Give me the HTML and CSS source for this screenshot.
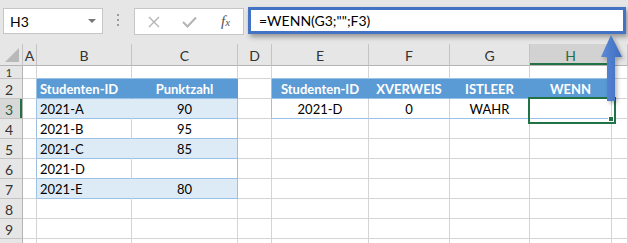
FILE: index.html
```html
<!DOCTYPE html>
<html lang="de">
<head>
    <meta charset="UTF-8">
    <title>WENN ISTLEER</title>
    <link rel="stylesheet" href="styles.css">
</head>
<body>
    <div class="toolbar">
        <div class="namebox">
            <span>H3</span>
            <span class="caret"></span>
        </div>
        <div class="dots"><i></i><i></i><i></i></div>
        <div class="fbtns">
            <svg width="12" height="12" viewBox="0 0 12 12"><path d="M1 1L11 11M11 1L1 11" stroke="#b4b4b4" stroke-width="1.4" fill="none"/></svg>
            <svg width="15" height="12" viewBox="0 0 15 12"><path d="M1 6L5.5 10.5L14 1.5" stroke="#b4b4b4" stroke-width="2" fill="none"/></svg>
            <span class="fx">f<small>x</small></span>
        </div>
        <div class="formula">=WENN(G3;"";F3)</div>
    </div>

    <div class="sheet">
        <!-- column headers -->
        <div class="c ch corner"><span class="tri"></span></div>
        <div class="c ch">A</div>
        <div class="c ch">B</div>
        <div class="c ch">C</div>
        <div class="c ch">D</div>
        <div class="c ch">E</div>
        <div class="c ch">F</div>
        <div class="c ch">G</div>
        <div class="c ch ch-sel">H</div>
        <div class="c ch"></div>

        <!-- 1 -->
        <div class="c rh rh-low">1</div>
        <div class="c"></div>
        <div class="c bb"></div>
        <div class="c bb"></div>
        <div class="c"></div>
        <div class="c bb"></div>
        <div class="c bb"></div>
        <div class="c bb"></div>
        <div class="c bb"></div>
        <div class="c"></div>

        <!-- 2 -->
        <div class="c rh">2</div>
        <div class="c rb"></div>
        <div class="c head">Studenten-ID</div>
        <div class="c head mid">Punktzahl</div>
        <div class="c rb"></div>
        <div class="c head mid">Studenten-ID</div>
        <div class="c head mid">XVERWEIS</div>
        <div class="c head mid">ISTLEER</div>
        <div class="c head mid">WENN</div>
        <div class="c"></div>

        <!-- 3 -->
        <div class="c rh rh-sel">3</div>
        <div class="c rb"></div>
        <div class="c band nb">2021-A</div>
        <div class="c band mid">90</div>
        <div class="c rb"></div>
        <div class="c bb mid">2021-D</div>
        <div class="c bb mid">0</div>
        <div class="c bb mid">WAHR</div>
        <div class="c bb sel"><span class="handle"></span></div>
        <div class="c"></div>

        <!-- 4 -->
        <div class="c rh">4</div>
        <div class="c rb"></div>
        <div class="c bb">2021-B</div>
        <div class="c bb rb mid">95</div>
        <div class="c"></div>
        <div class="c"></div>
        <div class="c"></div>
        <div class="c"></div>
        <div class="c"></div>
        <div class="c"></div>

        <!-- 5 -->
        <div class="c rh">5</div>
        <div class="c rb"></div>
        <div class="c band nb">2021-C</div>
        <div class="c band mid">85</div>
        <div class="c"></div>
        <div class="c"></div>
        <div class="c"></div>
        <div class="c"></div>
        <div class="c"></div>
        <div class="c"></div>

        <!-- 6 -->
        <div class="c rh">6</div>
        <div class="c rb"></div>
        <div class="c bb">2021-D</div>
        <div class="c bb rb mid"></div>
        <div class="c"></div>
        <div class="c"></div>
        <div class="c"></div>
        <div class="c"></div>
        <div class="c"></div>
        <div class="c"></div>

        <!-- 7 -->
        <div class="c rh">7</div>
        <div class="c rb"></div>
        <div class="c band nb">2021-E</div>
        <div class="c band mid">80</div>
        <div class="c"></div>
        <div class="c"></div>
        <div class="c"></div>
        <div class="c"></div>
        <div class="c"></div>
        <div class="c"></div>

        <!-- 8 -->
        <div class="c rh">8</div>
        <div class="c"></div><div class="c"></div><div class="c"></div><div class="c"></div>
        <div class="c"></div><div class="c"></div><div class="c"></div><div class="c"></div><div class="c"></div>

        <!-- 9 -->
        <div class="c rh">9</div>
        <div class="c"></div><div class="c"></div><div class="c"></div><div class="c"></div>
        <div class="c"></div><div class="c"></div><div class="c"></div><div class="c"></div><div class="c"></div>

        <!-- 10, only its top edge is in view -->
        <div class="c rh"></div>
        <div class="c"></div><div class="c"></div><div class="c"></div><div class="c"></div>
        <div class="c"></div><div class="c"></div><div class="c"></div><div class="c"></div><div class="c"></div>
    </div>

    <svg class="arrow" width="30" height="75" viewBox="0 0 30 75">
        <defs>
            <linearGradient id="ag" x1="0" x2="1" y1="0" y2="0">
                <stop offset="0" stop-color="#5a8ad8"/>
                <stop offset="1" stop-color="#3e6dbd"/>
            </linearGradient>
        </defs>
        <path d="M13 5L24 27H17V71H9V27H3Z" fill="url(#ag)"/>
    </svg>
</body>
</html>
```

FILE: styles.css
```css
* {
    margin: 0;
    padding: 0;
    box-sizing: border-box;
}

body {
    font-family: 'Lato', sans-serif;
    font-size: 13px;
    color: #000;
    background: #fff;
    width: 628px;
    height: 243px;
    overflow: hidden;
    position: relative;
}

.toolbar {
    height: 44px;
    background: #e6e6e6;
    display: flex;
    align-items: flex-start;
    padding: 8px 0 0 3px;
}

.namebox {
    width: 100px;
    height: 26px;
    background: #fff;
    border: 1px solid #c6c6c6;
    display: flex;
    align-items: center;
    justify-content: space-between;
    padding: 0 6px 0 6px;
    font-size: 14px;
}

.caret {
    width: 0;
    height: 0;
    border-left: 4px solid transparent;
    border-right: 4px solid transparent;
    border-top: 4px solid #777;
}

.dots {
    margin: 6px 0 0 14px;
    width: 3px;
    display: flex;
    flex-direction: column;
    gap: 3px;
}

.dots i {
    display: block;
    width: 2px;
    height: 2px;
    background: #9a9a9a;
}

.fbtns {
    margin-left: 14px;
    width: 110px;
    height: 27px;
    background: #fff;
    border: 1px solid #c6c6c6;
    display: flex;
    align-items: center;
    padding-left: 13px;
    gap: 22px;
}

.fx {
    font-family: 'Liberation Serif', serif;
    font-style: italic;
    font-size: 15px;
    color: #555;
    margin-left: 2px;
}

.fx small {
    font-size: 11px;
}

.formula {
    margin: -1px 0 0 4px;
    width: 378px;
    height: 27px;
    background: #fff;
    border: 3px solid #4472c4;
    box-shadow: 2px 3px 5px rgba(0, 0, 0, 0.35);
    padding: 0 8px;
    display: flex;
    align-items: center;
    font-size: 14px;
}

.sheet {
    display: grid;
    grid-template-columns: 23px 14px 95px 106px 34px 97px 81px 80px 82px 1fr;
    grid-template-rows: 22px 13px repeat(8, 20px) 5px;
}

.c {
    border-right: 1px solid #d4d4d4;
    border-bottom: 1px solid #d4d4d4;
    display: flex;
    align-items: center;
    padding: 1px 3px 0 3px;
    white-space: nowrap;
    overflow: hidden;
}

.ch {
    background: #e6e6e6;
    border-right-color: #c4c4c4;
    border-bottom-color: #b4b4b4;
    justify-content: center;
    color: #333;
    font-size: 14px;
}

.ch-sel {
    background: #d2d2d2;
    color: #217346;
    box-shadow: inset 0 -2px 0 #217346;
}

.corner {
    position: relative;
}

.tri {
    position: absolute;
    right: 3px;
    bottom: 3px;
    width: 0;
    height: 0;
    border-left: 14px solid transparent;
    border-bottom: 14px solid #b9b9b9;
}

.rh {
    background: #e6e6e6;
    border-right-color: #b4b4b4;
    border-bottom-color: #c4c4c4;
    justify-content: center;
    color: #333;
    font-size: 14px;
    padding: 1px 4px 0 0;
}

.rh-low {
    font-size: 11px;
    line-height: 11px;
    padding: 0 4px 0 0;
    overflow: visible;
}

.rh-sel {
    background: #d8d8d8;
    color: #2b5d47;
    box-shadow: inset -2px 0 0 #217346;
}

.head {
    background: #5b9bd5;
    color: #fff;
    font-weight: bold;
    border-right-color: transparent;
    border-bottom-color: #9bc2e6;
}

.band {
    background: #ddebf7;
    border-bottom-color: #9bc2e6;
}

.nb {
    border-right-color: transparent;
}

.bb {
    border-bottom-color: #9bc2e6;
}

.rb {
    border-right-color: #9bc2e6;
}

.band.mid {
    border-right-color: #9bc2e6;
}

.mid {
    justify-content: center;
}

.sel {
    position: relative;
    overflow: visible;
}

.sel::after {
    content: "";
    position: absolute;
    left: -2px;
    top: -2px;
    width: 84px;
    height: 23px;
    border: 2px solid #217346;
}

.handle {
    position: absolute;
    right: -3px;
    bottom: -4px;
    width: 6px;
    height: 6px;
    background: #217346;
    border: 1px solid #fff;
    z-index: 1;
}

.arrow {
    position: absolute;
    left: 598px;
    top: 30px;
    filter: drop-shadow(2px 2px 2px rgba(0, 0, 0, 0.3));
    z-index: 2;
}
```
